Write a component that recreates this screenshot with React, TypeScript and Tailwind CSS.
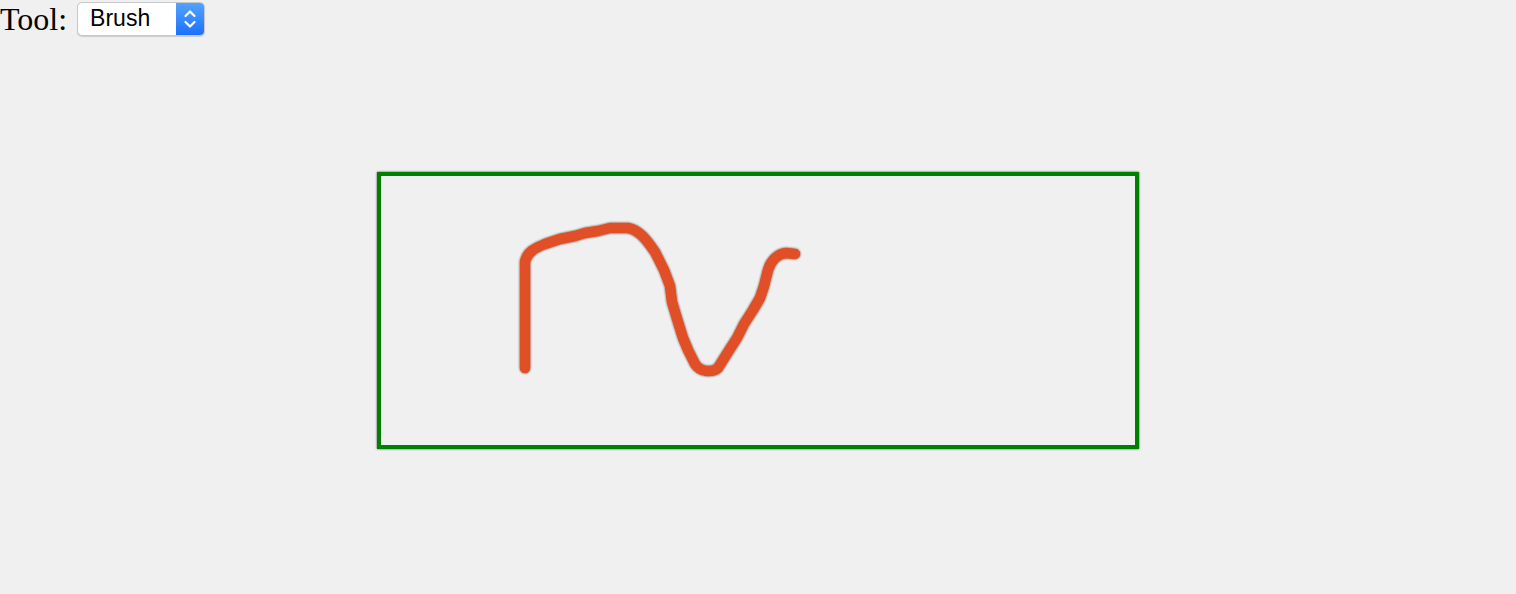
import { useState } from 'react';

const STROKE =
  'M525,368 L525,262 C527,252 535,248 545,244 L560,239 L575,236 L585,233 L598,231 L610,228 L628,228 C640,230 648,242 655,252 L664,270 L670,286 L672,302 L678,322 L683,338 L688,350 L695,364 C700,372 712,373 718,368 L728,352 L737,338 L744,324 L753,310 L760,298 L764,286 L768,270 C771,260 778,254 786,253 L795,254';

export default function App() {
  const [tool, setTool] = useState('Brush');

  return (
    <div className="min-h-[594px] bg-[#f0f0f0] font-['Liberation_Serif',serif]">
      {/* Toolbar */}
      <div className="flex items-center h-[37px]">
        <span className="text-[32px] leading-none text-black">Tool:</span>
        <label className="ml-[10px] flex h-[34px] w-[128px] rounded-[5px] border border-[#c8c8c8] bg-white shadow-[0_1px_1px_rgba(0,0,0,0.15)] overflow-hidden">
          <select
            value={tool}
            onChange={(e) => setTool(e.target.value)}
            className="flex-1 appearance-none bg-transparent pl-[12px] text-[23px] leading-none text-black outline-none font-['Liberation_Sans',Arial,sans-serif]"
          >
            <option>Brush</option>
            <option>Eraser</option>
          </select>
          <span className="flex w-[28px] items-center justify-center bg-gradient-to-b from-[#53a3ff] to-[#1a70ff]">
            <svg width="14" height="24" viewBox="0 0 14 24" fill="none" stroke="white" strokeWidth="2.2" strokeLinecap="round" strokeLinejoin="round">
              <path d="M2.5 9 L7 4.5 L11.5 9" />
              <path d="M2.5 15 L7 19.5 L11.5 15" />
            </svg>
          </span>
        </label>
      </div>

      {/* Canvas */}
      <div className="flex justify-center pt-[135px]">
        <div className="h-[277px] w-[762px] border-[4px] border-[#008000] shadow-[0_0_2px_rgba(0,0,0,0.7)]">
          <svg width="754" height="269" viewBox="381 176 754 269" className="block">
            <defs>
              <filter id="soft" x="-10%" y="-10%" width="120%" height="120%">
                <feDropShadow dx="0" dy="0" stdDeviation="1.2" floodColor="#000" floodOpacity="0.7" />
              </filter>
            </defs>
            <path
              d={STROKE}
              fill="none"
              stroke="#e05028"
              strokeWidth="10.5"
              strokeLinecap="round"
              strokeLinejoin="round"
              filter="url(#soft)"
            />
          </svg>
        </div>
      </div>
    </div>
  );
}
